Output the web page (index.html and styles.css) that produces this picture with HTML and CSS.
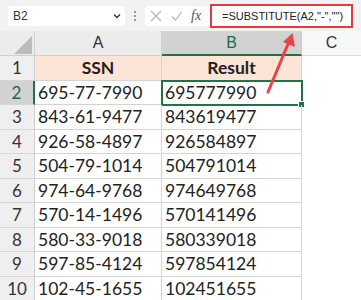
FILE: index.html
```html
<!DOCTYPE html>
<html lang="en">
<head>
  <meta charset="UTF-8" />
  <title>SUBSTITUTE</title>
  <link rel="stylesheet" href="styles.css">
</head>
<body>
  <div class="toolbar">
    <div class="namebox">
      <span>B2</span>
      <svg class="chev" width="8" height="6" viewBox="0 0 8 6"><path d="M1 1.5 L4 4.5 L7 1.5" fill="none" stroke="#333" stroke-width="1.4"/></svg>
    </div>
    <div class="dots"><i></i><i></i><i></i></div>
    <div class="fxbox">
      <svg width="12" height="12" viewBox="0 0 12 12"><path d="M1 1 L11 11 M11 1 L1 11" stroke="#b5b5b5" stroke-width="1.2"/></svg>
      <svg class="check" width="12" height="12" viewBox="0 0 12 12"><path d="M1 6.5 L4.5 10 L11 1.5" fill="none" stroke="#b5b5b5" stroke-width="1.2"/></svg>
      <span class="fx">fx</span>
    </div>
    <div class="formula">=SUBSTITUTE(A2,"-","")</div>
  </div>

  <div class="sheet">
    <div class="corner"><div class="tri"></div></div>
    <div class="colhead">A</div>
    <div class="colhead sel">B</div>
    <div class="colhead last">C</div>

    <div class="rowhead">1</div>
    <div class="cell title">SSN</div>
    <div class="cell title">Result</div>
    <div class="blank"></div>

    <div class="rowhead sel">2</div>
    <div class="cell">695-77-7990</div>
    <div class="cell active">695777990<span class="handle"></span></div>
    <div class="blank"></div>

    <div class="rowhead">3</div>
    <div class="cell">843-61-9477</div>
    <div class="cell">843619477</div>
    <div class="blank"></div>

    <div class="rowhead">4</div>
    <div class="cell">926-58-4897</div>
    <div class="cell">926584897</div>
    <div class="blank"></div>

    <div class="rowhead">5</div>
    <div class="cell">504-79-1014</div>
    <div class="cell">504791014</div>
    <div class="blank"></div>

    <div class="rowhead">6</div>
    <div class="cell">974-64-9768</div>
    <div class="cell">974649768</div>
    <div class="blank"></div>

    <div class="rowhead">7</div>
    <div class="cell">570-14-1496</div>
    <div class="cell">570141496</div>
    <div class="blank"></div>

    <div class="rowhead">8</div>
    <div class="cell">580-33-9018</div>
    <div class="cell">580339018</div>
    <div class="blank"></div>

    <div class="rowhead">9</div>
    <div class="cell">597-85-4124</div>
    <div class="cell">597854124</div>
    <div class="blank"></div>

    <div class="rowhead">10</div>
    <div class="cell">102-45-1655</div>
    <div class="cell">102451655</div>
    <div class="blank"></div>
  </div>

  <!-- annotation arrow pointing at the formula -->
  <svg class="arrow" width="361" height="300" viewBox="0 0 361 300">
    <line x1="268" y1="92" x2="288" y2="44" stroke="#e8424a" stroke-width="3" stroke-linecap="round"/>
    <polygon points="292.5,33 295,47 283,42" fill="#e8424a"/>
  </svg>
</body>
</html>
```

FILE: styles.css
```css
body {
  margin: 0;
  width: 361px;
  height: 300px;
  overflow: hidden;
  font-family: "Liberation Sans", Arial, sans-serif;
  color: #222;
  background: #fff;
  position: relative;
}

.toolbar {
  height: 31px;
  background: #f2f2f2;
  display: flex;
  align-items: center;
  padding-left: 8px;
  box-sizing: border-box;
}

.namebox {
  width: 117px;
  height: 20px;
  background: #fff;
  border-radius: 3px;
  display: flex;
  align-items: center;
  justify-content: space-between;
  padding: 0 4px 0 5px;
  box-sizing: border-box;
  font-size: 12px;
  color: #333;
}

.dots {
  width: 20px;
  display: flex;
  flex-direction: column;
  align-items: center;
  gap: 2px;
}

.dots i {
  width: 2px;
  height: 2px;
  background: #777;
  border-radius: 1px;
}

.fxbox {
  width: 65px;
  height: 20px;
  background: #fff;
  border-radius: 3px 0 0 3px;
  display: flex;
  align-items: center;
  padding-left: 5px;
  gap: 10px;
  box-sizing: border-box;
}

.fxbox .check {
  margin-left: -1px;
}

.fx {
  font-family: "Liberation Serif", serif;
  font-style: italic;
  font-size: 14px;
  color: #555;
  margin-left: -2px;
}

.formula {
  width: 143px;
  height: 24px;
  border: 2px solid #e53a40;
  background: #fff;
  box-sizing: border-box;
  font-size: 11px;
  color: #222;
  display: flex;
  align-items: center;
  padding-left: 10px;
  white-space: nowrap;
}

.sheet {
  display: grid;
  grid-template-columns: 35px 127px 140px 59px;
  grid-template-rows: 25px repeat(10, 24.5px);
}

.corner {
  background: #ececec;
  border-right: 1px solid #cfcfcf;
  border-bottom: 1px solid #cfcfcf;
  position: relative;
}

.tri {
  position: absolute;
  right: 2px;
  bottom: 1px;
  width: 0;
  height: 0;
  border-left: 18px solid transparent;
  border-bottom: 18px solid #bcbcbc;
}

.colhead {
  background: #ececec;
  border-right: 1px solid #cfcfcf;
  border-bottom: 1px solid #cfcfcf;
  display: flex;
  align-items: center;
  justify-content: center;
  font-size: 16px;
  color: #333;
}

.colhead.sel {
  background: #d2d2d2;
  color: #1e6b41;
  border-bottom: 2px solid #217346;
}

.colhead.last {
  background: #f7f7f7;
  border-right: none;
  border-bottom: 1px solid #dcdcdc;
}

.rowhead {
  background: #efefef;
  border-right: 1px solid #cfcfcf;
  border-bottom: 1px solid #d6d6d6;
  display: flex;
  align-items: center;
  justify-content: center;
  font-family: Lato, "Liberation Sans", sans-serif;
  font-size: 17px;
  color: #333;
}

.rowhead.sel {
  background: #d2d2d2;
  color: #1e6b41;
  border-right: 2px solid #217346;
}

.cell {
  border-right: 1px solid #d4d4d4;
  border-bottom: 1px solid #d4d4d4;
  font-family: Lato, "Liberation Sans", sans-serif;
  font-size: 17.5px;
  padding-left: 3px;
  display: flex;
  align-items: center;
  white-space: nowrap;
  position: relative;
}

.cell.title {
  background: #fce4d6;
  font-weight: bold;
  justify-content: center;
  padding-left: 0;
}

.cell.active {
  outline: 2px solid #217346;
  outline-offset: -1px;
}

.handle {
  position: absolute;
  right: -4px;
  bottom: -4px;
  width: 5px;
  height: 5px;
  background: #217346;
  border: 1px solid #fff;
}

.blank {
  background: #fff;
}

.arrow {
  position: absolute;
  left: 0;
  top: 0;
  pointer-events: none;
}
```
